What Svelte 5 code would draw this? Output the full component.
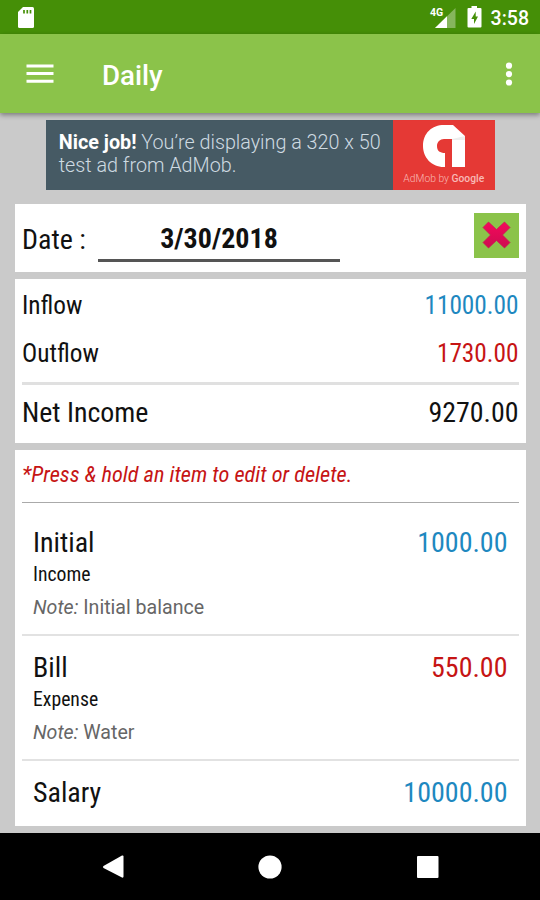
<script>
	export let date = '3/30/2018';

	let inflow = 11000;
	let outflow = 1730;

	let entries = [
		{ name: 'Initial', type: 'Income', note: 'Initial balance', amount: 1000 },
		{ name: 'Bill', type: 'Expense', note: 'Water', amount: 550 },
		{ name: 'Salary', type: 'Income', note: '', amount: 10000 }
	];

	function money(value) {
		return value.toFixed(2);
	}

	$: net = inflow - outflow;
</script>

<div class="screen">
	<div class="status">
		<svg class="sd" width="18" height="22" viewBox="0 0 18 22">
			<path d="M6 0H15.500Q17 0 17 1.500V19.500Q17 21 15.500 21H2.500Q1 21 1 19.500V5Z" fill="#fff" />
			<path d="M7 3V6.500M10.300 3V6.500M13.500 3V6.500" stroke="#458f07" stroke-width="1.700" />
		</svg>
		<div class="status-right">
			<span class="network">4G</span>
			<svg class="signal" width="21" height="20" viewBox="0 0 21 20">
				<path d="M20.500 0V20H0Z" fill="#fff" opacity=".35" />
				<path d="M12 8.300V20H0Z" fill="#fff" />
			</svg>
			<svg class="battery" width="15" height="22" viewBox="0 0 15 22">
				<path d="M4.500 0H10V2H13.500Q14.500 2 14.500 3V20.500Q14.500 21.500 13.500 21.500H1.500Q.5 21.500 .5 20.500V3Q.5 2 1.500 2H4.500Z" fill="#fff" />
				<path d="M8.700 5.500L4.300 13H7V18L11 10.500H8.700Z" fill="#458f07" />
			</svg>
			<span class="clock">3:58</span>
		</div>
	</div>

	<header class="toolbar">
		<svg width="28" height="20" viewBox="0 0 28 20">
			<path d="M.5 2H27.500M.5 9.600H27.500M.5 17.300H27.500" stroke="#fff" stroke-width="3" />
		</svg>
		<h1>Daily</h1>
		<svg width="8" height="26" viewBox="0 0 8 26">
			<circle cx="4" cy="4.700" r="3.100" fill="#fff" />
			<circle cx="4" cy="13.100" r="3.100" fill="#fff" />
			<circle cx="4" cy="21.500" r="3.100" fill="#fff" />
		</svg>
	</header>

	<main>
		<div class="ad">
			<p><b>Nice job!</b> You’re displaying a 320 x 50<br />test ad from AdMob.</p>
			<div class="admob">
				<svg width="44" height="44" viewBox="0 0 44 44">
					<path d="M22 43C9 43 1 33 1 22C1 9 10 1 22 1H31L43 12V43H30V15H22C18 15 15 18 15 22C15 27 18 29 23 29V43Z" fill="#fff" />
					<path d="M30 15L43 12V16H30Z" fill="#eee" />
				</svg>
				<span>AdMob by <b>Google</b></span>
			</div>
		</div>

		<section class="card date-card">
			<span class="label">Date :</span>
			<div class="date">{date}</div>
			<button aria-label="Close">
				<svg width="29" height="28" viewBox="0 0 29 28">
					<defs>
						<linearGradient id="cross" x1="0" y1="0" x2="0" y2="1">
							<stop offset="0" stop-color="#f5085c" />
							<stop offset="1" stop-color="#cc0d50" />
						</linearGradient>
					</defs>
					<path d="M6.500 1L14.500 8.500L22.500 1L28 6.500L20.500 14L28 21.500L22.500 27L14.500 19.500L6.500 27L1 21.500L8.500 14L1 6.500Z" fill="url(#cross)" stroke="#c81555" stroke-width=".7" stroke-linejoin="round" />
				</svg>
			</button>
		</section>

		<section class="card totals">
			<div class="row inflow">
				<span>Inflow</span>
				<span class="in">{money(inflow)}</span>
			</div>
			<div class="row outflow">
				<span>Outflow</span>
				<span class="out">{money(outflow)}</span>
			</div>
			<div class="row net">
				<span>Net Income</span>
				<span>{money(net)}</span>
			</div>
		</section>

		<section class="card list">
			<p class="hint">*Press &amp; hold an item to edit or delete.</p>
			{#each entries as entry}
				<div class="entry">
					<div class="title">
						<span>{entry.name}</span>
						<span class={entry.type === 'Income' ? 'in' : 'out'}>{money(entry.amount)}</span>
					</div>
					{#if entry.note}
						<div class="type">{entry.type}</div>
						<div class="note"><i>Note:</i> {entry.note}</div>
					{/if}
				</div>
			{/each}
		</section>
	</main>

	<nav>
		<svg width="22" height="26" viewBox="0 0 22 26">
			<path d="M1.500 12L20 1.500Q21.500 1 21.500 2.500V22.500Q21.500 24 20 23.500L1.500 14Q.3 13 1.500 12Z" fill="#fff" />
		</svg>
		<svg width="24" height="24" viewBox="0 0 24 24">
			<circle cx="12" cy="12" r="11.600" fill="#fff" />
		</svg>
		<svg width="22" height="22" viewBox="0 0 22 22">
			<rect width="21.500" height="22" rx="1" fill="#fff" />
		</svg>
	</nav>
</div>

<style>
	:global(body) {
		margin: 0;
		background: #000;
	}

	.screen {
		width: 540px;
		height: 900px;
		display: flex;
		flex-direction: column;
		overflow: hidden;
		background: #cacaca;
		font-family: Roboto, "Liberation Sans", sans-serif;
		color: #111;
	}

	svg {
		display: block;
		flex: none;
	}

	.status {
		height: 34px;
		flex: none;
		display: flex;
		justify-content: space-between;
		padding: 0 11px 0 17px;
		background: #458f07;
		color: #fff;
	}

	.sd {
		margin-top: 7px;
	}

	.status-right {
		display: flex;
	}

	.network {
		margin: 6px -8px 0 0;
		font-size: 10.5px;
		line-height: 13px;
		font-weight: 700;
	}

	.signal {
		margin-top: 8px;
	}

	.battery {
		margin: 6px 9px 0 10.5px;
	}

	.clock {
		font-size: 19.500px;
		line-height: 37px;
		font-weight: 500;
	}

	.toolbar {
		position: relative;
		height: 79px;
		flex: none;
		display: flex;
		align-items: center;
		padding: 0 27px 0 26px;
		box-sizing: border-box;
		background: #8bc34a;
		box-shadow: 0 2px 5px rgba(0, 0, 0, 0.4);
		color: #fff;
	}

	h1 {
		flex: 1;
		margin: 4px 0 0 48px;
		font-size: 27.700px;
		line-height: 34px;
		font-weight: 500;
	}

	main {
		flex: 1;
		display: flex;
		flex-direction: column;
		gap: 7px;
		padding: 7px 14px 7px 14.5px;
	}

	.ad {
		display: flex;
		align-self: center;
		width: 449px;
		height: 70px;
		margin-bottom: 7px;
		background: #465a64;
		color: #cfdbe2;
	}

	.ad p {
		flex: 1;
		margin: 10.500px 0 0 13px;
		font-size: 19.750px;
		line-height: 23.5px;
		font-weight: 300;
		white-space: nowrap;
	}

	.ad p b {
		color: #fff;
		font-weight: 700;
	}

	.admob {
		display: flex;
		flex-direction: column;
		align-items: center;
		width: 102px;
		padding-top: 4px;
		box-sizing: border-box;
		background: #e53935;
	}

	.admob span {
		margin-top: 4px;
		font-size: 10.300px;
		line-height: 14px;
		font-weight: 300;
		color: #f8b9b6;
	}

	.admob b {
		font-weight: 500;
	}

	.card {
		padding: 0 7.5px;
		background: #fff;
		font-stretch: 75%;
	}

	.date-card {
		height: 67.500px;
		display: flex;
	}

	.label {
		width: 76px;
		font-size: 28px;
		line-height: 71px;
	}

	.date {
		width: 242px;
		height: 58px;
		box-sizing: border-box;
		border-bottom: 3px solid #555;
		font-size: 28px;
		line-height: 70px;
		font-weight: 700;
		text-align: center;
	}

	button {
		display: flex;
		align-items: center;
		justify-content: center;
		width: 45px;
		height: 45px;
		margin: 8.500px 0 0 auto;
		padding: 0;
		border: 0;
		background: #8bc34a;
	}

	.totals {
		height: 164.500px;
	}

	.row,
	.title {
		display: flex;
		justify-content: space-between;
	}

	.row {
		font-size: 25.300px;
	}

	.inflow {
		line-height: 53px;
	}

	.outflow {
		height: 50px;
		line-height: 44px;
	}

	.net {
		border-top: 3px solid #e0e0e0;
		font-size: 27.900px;
		line-height: 55px;
	}

	.in {
		color: #1e88c0;
	}

	.out {
		color: #c61414;
	}

	.list {
		flex: 1;
	}

	.hint {
		margin: 0 0 8px;
		border-bottom: 1.500px solid #aaa;
		color: #c61414;
		font-size: 22.300px;
		font-style: italic;
		line-height: 48px;
		padding-bottom: 3.500px;
	}

	.entry {
		padding: 12px 11px 14px;
		border-bottom: 2px solid #e2e2e2;
	}

	.entry:last-child {
		border-bottom: 0;
		padding-bottom: 0;
	}

	.title {
		font-size: 28px;
		line-height: 40px;
	}

	.type {
		font-size: 19.700px;
		line-height: 24px;
	}

	.note {
		margin-top: 9px;
		font-size: 19.600px;
		line-height: 24px;
		font-stretch: 100%;
		color: #666;
	}

	nav {
		height: 67px;
		flex: none;
		display: flex;
		align-items: center;
		justify-content: space-between;
		padding: 0 101.500px;
		box-sizing: border-box;
		background: #000;
	}
</style>
